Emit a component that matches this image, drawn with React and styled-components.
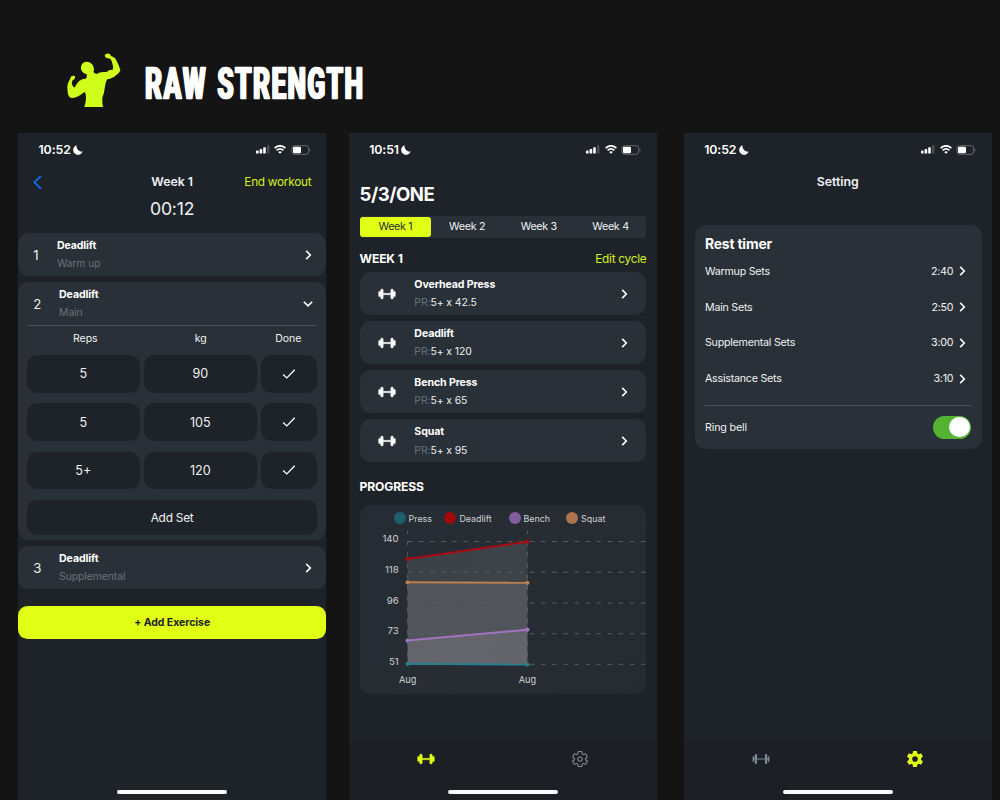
import React from "react";
import styled, { createGlobalStyle, css } from "styled-components";
import { IoBarbell, IoBarbellOutline, IoSettingsOutline, IoSettingsSharp } from "react-icons/io5";

const Global = createGlobalStyle`
  *, *::before, *::after { box-sizing: border-box; }
  body {
    margin: 0;
    background: #141414;
    color: #f0f1f2;
    font-family: Inter, "Liberation Sans", sans-serif;
  }
  h1, h2, h3, p { margin: 0; }
  svg { display: block; flex: none; }
`;

const Page = styled.div`
  width: 1000px;
  height: 800px;
  overflow: hidden;
  display: flex;
  flex-direction: column;
  background: #141414;
`;

const Brand = styled.header`
  height: 133px;
  padding: 45px 0 0 60px;
  display: flex;
  align-items: flex-start;
`;

const BrandName = styled.h1`
  margin: 9.4px 0 0 15px;
  font-family: "Roboto", "Liberation Sans", sans-serif;
  font-weight: 900;
  font-size: 45.2px;
  line-height: 60px;
  letter-spacing: 2.2px;
  word-spacing: 4px;
  font-kerning: none;
  white-space: nowrap;
  color: #fff;
  -webkit-text-stroke: 0.5px #fff;
  text-shadow: 1.3px 0 0 #fff, -1.3px 0 0 #fff;
  transform: scaleX(0.584);
  transform-origin: 0 50%;
`;

const Screens = styled.main`
  flex: 1;
  display: flex;
  gap: 23px;
  padding-left: 18.3px;
`;

const Screen = styled.section`
  width: 307.7px;
  height: 667px;
  flex: none;
  display: flex;
  flex-direction: column;
  background: #1e2329;
  & + & + & { margin-left: 4.3px; }
`;

const StatusRow = styled.div`
  height: 33px;
  flex: none;
  padding: 0 15.4px 0 20.2px;
  display: flex;
  align-items: center;
  justify-content: space-between;
`;

const Clock = styled.div`
  display: flex;
  align-items: center;
  gap: 2.2px;
  font-size: 12.3px;
  font-weight: 600;
  letter-spacing: -0.08px;
  color: #fff;
`;

const Signals = styled.div`
  display: flex;
  align-items: center;
  gap: 4.5px;
`;

const NavBar = styled.div`
  height: 32px;
  flex: none;
  padding: 0 14.7px;
  display: grid;
  grid-template-columns: 1fr auto 1fr;
  align-items: center;
`;

const NavTitle = styled.h2`
  grid-column: 2;
  font-size: 12.3px;
  line-height: 16px;
  font-weight: 600;
  margin-top: -1px;
`;

const TextAction = styled.button`
  border: 0;
  padding: 0;
  background: none;
  font: inherit;
  font-size: 11.8px;
  letter-spacing: -0.26px;
  line-height: 15px;
  color: #d5f01c;
  justify-self: end;
`;

const Timer = styled.div`
  height: 22px;
  margin-bottom: 13px;
  font-size: 17.6px;
  line-height: 22px;
  letter-spacing: -0.2px;
  text-align: center;
`;

const Stack = styled.div`
  display: flex;
  flex-direction: column;
  gap: 6px;
`;

const Card = styled.article`
  border-radius: 10.5px;
  background: #2a3037;
`;

const ExerciseHead = styled.div`
  height: 43.1px;
  display: grid;
  grid-template-columns: ${(p) => p.$cols};
  align-items: center;
`;

const Index = styled.span`
  font-size: 13.2px;
  padding-left: 15px;
`;

const Titles = styled.div`
  display: flex;
  flex-direction: column;
  gap: 3.4px;
  font-size: 10.4px;
  line-height: 15px;
  letter-spacing: -0.08px;
  white-space: nowrap;
`;

const Name = styled.h3`
  font-size: 10.6px;
  line-height: 15px;
  font-weight: 700;
  letter-spacing: -0.12px;
  color: #fff;
`;

const Muted = styled.span`
  color: #66747d;
`;

const SetPanel = styled.div`
  margin: 0 8.7px 0 8.5px;
  border-top: 1px solid #4b535a;
  padding-bottom: 5.5px;
`;

const setColumns = css`
  display: grid;
  grid-template-columns: 113px 113px 56px;
  column-gap: 4px;
`;

const SetLabels = styled.div`
  ${setColumns}
  height: 29px;
  padding-top: 5px;
  font-size: 10.5px;
  line-height: 15px;
  text-align: center;
  span:first-child { padding-left: 4px; }
  span:nth-child(2) { padding-left: 1px; }
  span:last-child { padding-right: 1px; }
`;

const SetRow = styled.div`
  ${setColumns}
  height: 37.6px;
  margin-bottom: 10.6px;
`;

const Cell = styled.div`
  display: flex;
  align-items: center;
  justify-content: center;
  border-radius: 10.5px;
  background: #1e2329;
  font-size: 12.6px;
`;

const AddSet = styled.button`
  display: block;
  width: 100%;
  height: 35px;
  border: 0;
  border-radius: 10px;
  background: #1e2329;
  color: #f0f1f2;
  font: inherit;
  font-size: 11.9px;
  letter-spacing: -0.25px;
`;

const AddExercise = styled.button`
  flex: none;
  height: 33.5px;
  margin-top: 16.5px;
  border: 0;
  border-radius: 9.5px;
  background: #e1ff14;
  color: #1e2329;
  font: inherit;
  font-size: 10.5px;
  font-weight: 700;
  letter-spacing: -0.05px;
`;

const HomeBar = styled.div`
  width: 110px;
  height: 4px;
  margin: auto auto 6px;
  border-radius: 2px;
  background: #fafafa;
`;

const Program = styled.div`
  display: flex;
  flex-direction: column;
  padding: 0 10.3px 0 10.6px;
`;

const ProgramTitle = styled.h2`
  padding: 16px 0 4px;
  font-size: 18.6px;
  line-height: 24px;
  font-weight: 700;
  letter-spacing: -0.5px;
  color: #fff;
`;

const Segments = styled.div`
  display: grid;
  grid-template-columns: repeat(4, 1fr);
  height: 22.5px;
  margin-top: 5.5px;
  padding: 1px 0;
  border-radius: 3px;
  background: #2a3037;
`;

const Segment = styled.button`
  border: 0;
  padding: 0 0 1px;
  border-radius: 3px;
  background: ${(p) => (p.$active ? "#e1ff14" : "transparent")};
  color: ${(p) => (p.$active ? "#2a3037" : "#f0f1f2")};
  font: inherit;
  font-size: 10.7px;
  letter-spacing: -0.28px;
`;

const SectionHead = styled.div`
  height: ${(p) => p.$height || 34}px;
  display: flex;
  align-items: center;
  justify-content: space-between;
  padding-top: ${(p) => p.$top || 8}px;
`;

const SectionTitle = styled.h2`
  font-size: 12.1px;
  line-height: 16px;
  font-weight: 700;
  letter-spacing: -0.15px;
  color: #fff;
`;

const ChartCard = styled(Card)`
  height: 188.5px;
  display: flex;
  flex-direction: column;
  background: linear-gradient(120deg, #252c33, #282d34 45%, #262b31);
`;

const Legend = styled.div`
  height: 26px;
  padding-left: 34px;
  display: grid;
  grid-template-columns: 50.8px 64.2px 57.5px auto;
`;

const LegendItem = styled.div`
  display: flex;
  align-items: center;
  gap: 3px;
  font-size: 8.9px;
  color: #d0d2d4;
  &::before {
    content: "";
    width: 12px;
    height: 12px;
    border-radius: 50%;
    background: ${(p) => p.$color};
  }
`;

const AxisText = styled.text`
  font-size: ${(p) => p.$size || 9.6}px;
  fill: #d0d2d4;
`;

const TabBar = styled.nav`
  height: 60px;
  flex: none;
  margin-top: auto;
  display: flex;
  flex-direction: column;
  background: #1c1f26;
`;

const Tabs = styled.div`
  height: 38px;
  display: grid;
  grid-template-columns: 1fr 1fr;
  place-items: center;
`;

const Tab = styled.div`
  display: flex;
  color: ${(p) => (p.$active ? "#e1ff14" : "#7c8a94")};
`;

const SolidBarbell = styled(IoBarbell)`
  stroke: currentColor;
  stroke-width: 9px;
`;

const SettingsCard = styled(Card)`
  margin: 27px 9.8px 0 11px;
  height: 224.4px;
  padding: 9px 10.6px 0 10px;
`;

const SettingsTitle = styled.h2`
  font-size: 13.9px;
  line-height: 20px;
  font-weight: 700;
  letter-spacing: -0.18px;
  color: #fff;
`;

const SettingRow = styled.div`
  height: 35.8px;
  display: flex;
  align-items: center;
  justify-content: space-between;
  font-size: 10.7px;
  letter-spacing: -0.24px;
  padding-right: 4.4px;
`;

const SettingList = styled.div`
  height: 152px;
  margin: -0.5px 0 8px;
  border-bottom: 1px solid #4b535a;
`;

const Value = styled.span`
  display: flex;
  align-items: center;
  gap: 3.6px;
`;

const BellRow = styled.div`
  height: 27px;
  display: flex;
  align-items: center;
  justify-content: space-between;
  font-size: 10.7px;
  letter-spacing: -0.15px;
`;

const Toggle = styled.span`
  display: flex;
  justify-content: flex-end;
  width: 38px;
  height: 23px;
  padding: 1.2px;
  border-radius: 12px;
  background: #55b334;
  &::after {
    content: "";
    width: 20.6px;
    height: 20.6px;
    border-radius: 50%;
    background: #fff;
  }
`;

const Flexing = () => (
  <svg width="70" height="70" viewBox="0 0 210 210" fill="#d0ff1c">
    <path d="M134 31Q138 24 147 26Q151 27 153 33L161 37Q167 40 171 50Q178 62 181 76Q180 81 173 87Q162 98 150 101L142 103Q137 109 135 124Q133 145 127 158Q126 174 129 186H73Q78 172 78 158L77 146L73 141Q66 147 55 154Q44 160 34 159Q26 157 24 148Q22 135 22 124Q23 115 27 108L30 102L34 94Q39 91 44 93Q47 97 44 101L37 107Q34 113 37 121Q40 127 43 128Q46 125 50 117Q56 107 67 103L77 101Q82 96 80 88Q67 85 63 73Q62 60 69 54Q79 47 91 53Q101 60 102 72Q102 78 100 81Q104 86 110 87Q118 81 130 81L140 81Q147 73 158 74Q162 68 158 60Q156 48 151 41L142 40L136 37Z" />
  </svg>
);

const Moon = () => (
  <svg width="10" height="10" viewBox="0 0 10 10" fill="#fff">
    <path d="M3.5.3A4.9 4.9 0 1 0 9.7 6.6 5.6 5.6 0 0 1 3.5.3Z" />
  </svg>
);

const StatusBar = ({ time }) => (
  <StatusRow>
    <Clock>{time}<Moon /></Clock>
    <Signals>
      <svg width="14" height="9" viewBox="0 0 14 9" fill="#fff">
        <rect x="0" y="5.6" width="2.6" height="2.9" rx=".6" />
        <rect x="3.6" y="4.1" width="2.6" height="4.4" rx=".6" />
        <rect x="7.2" y="2.3" width="2.6" height="6.2" rx=".6" />
        <rect x="11" y=".3" width="2.4" height="8.2" rx=".6" fill="#4c5055" />
      </svg>
      <svg width="12" height="9" viewBox="0 0 12 9" fill="none" stroke="#fff" strokeWidth="1.7">
        <path d="M.6 3.1Q6-1.5 11.4 3.1M2.6 5.3Q6 2.4 9.4 5.3" />
        <path d="M6 8.8 4.1 6.9Q6 5.4 7.9 6.9Z" fill="#fff" stroke="none" />
      </svg>
      <svg width="20" height="10" viewBox="0 0 20 10">
        <rect x=".9" y=".7" width="16.8" height="8.6" rx="2.5" fill="none" stroke="#6d7175" strokeWidth=".9" />
        <rect x="2" y="1.8" width="8" height="6.4" rx="1.3" fill="#fff" />
        <path d="M18.6 3.6Q19.6 4.2 19.6 5T18.6 6.4Z" fill="#6d7175" />
      </svg>
    </Signals>
  </StatusRow>
);

const Chevron = ({ down }) => (
  <svg width="10" height="10" viewBox="0 0 10 10" fill="none" stroke="#fff" strokeWidth="1.6">
    <path d={down ? "M.8 2.8 5 6.9 9.2 2.8" : "M3.2 .9 7.3 5 3.2 9.1"} />
  </svg>
);

const Check = () => (
  <svg width="14" height="12" viewBox="0 0 14 12" fill="none" stroke="#fff" strokeWidth="1.3">
    <path d="M1.2 6.5 4.8 9.9 12.8 1.8" />
  </svg>
);

const Exercise = ({ index, kind, open, shift }) => (
  <ExerciseHead $cols={shift ? "38.6px 1fr 23px" : "40.8px 1fr 23px"}>
    <Index>{index}</Index>
    <Titles>
      <Name>Deadlift</Name>
      <Muted>{kind}</Muted>
    </Titles>
    <Chevron down={open} />
  </ExerciseHead>
);

const sets = [["5", "90"], ["5", "105"], ["5+", "120"]];

const WorkoutScreen = () => (
  <Screen>
    <StatusBar time="10:52" />
    <NavBar>
      <svg width="9" height="15" viewBox="0 0 9 15" fill="none" stroke="#0a6cf5" strokeWidth="1.8">
        <path d="M8 .8 1.4 7.3 8 13.8" />
      </svg>
      <NavTitle>Week 1</NavTitle>
      <TextAction>End workout</TextAction>
    </NavBar>
    <Timer>00:12</Timer>
    <Stack>
      <Card><Exercise index="1" kind="Warm up" shift /></Card>
      <Card>
        <Exercise index="2" kind="Main" open />
        <SetPanel>
          <SetLabels><span>Reps</span><span>kg</span><span>Done</span></SetLabels>
          {sets.map(([reps, kg]) => (
            <SetRow key={kg}>
              <Cell>{reps}</Cell>
              <Cell>{kg}</Cell>
              <Cell><Check /></Cell>
            </SetRow>
          ))}
          <AddSet>Add Set</AddSet>
        </SetPanel>
      </Card>
      <Card><Exercise index="3" kind="Supplemental" /></Card>
    </Stack>
    <AddExercise>+ Add Exercise</AddExercise>
    <HomeBar />
  </Screen>
);

const lifts = [["Overhead Press", "42.5"], ["Deadlift", "120"], ["Bench Press", "65"], ["Squat", "95"]];
const axis = [[140, 36.5], [118, 67.3], [96, 98], [73, 128.7], [51, 159.3]];
const series = [
  { color: "#a80c10", from: 54, to: 36.8 },
  { color: "#bd8150", from: 77.3, to: 77.8 },
  { color: "#a274c0", from: 135.5, to: 124.7 },
  { color: "#2b7f8c", from: 158.8, to: 159.6 },
];

const Chart = () => (
  <svg width="286.7" height="162" viewBox="0 26 286.7 162">
    {series.map((s) => (
      <path key={s.color} d={`M47.6 ${s.from}L167.4 ${s.to}V159.6H47.6Z`} fill="#f4ecf8" fillOpacity=".11" />
    ))}
    <g stroke="#5d6369" strokeWidth=".9" strokeDasharray="4.3 6.8">
      {axis.map(([v, y]) => <path key={v} d={`M48 ${y}H286`} />)}
      <path d="M47.6 25V159M167.4 25V159" />
    </g>
    {series.map((s) => (
      <g key={s.color} fill={s.color}>
        <path d={`M47.6 ${s.from}L167.4 ${s.to}`} stroke={s.color} strokeWidth="2" />
        <circle cx="47.6" cy={s.from} r="2.1" />
        <circle cx="167.4" cy={s.to} r="2.1" />
      </g>
    ))}
    {axis.map(([v, y]) => <AxisText key={v} x="38.6" y={y + 0.6} textAnchor="end">{v}</AxisText>)}
    <AxisText $size={9.2} x="47.6" y="177.8" textAnchor="middle">Aug</AxisText>
    <AxisText $size={9.2} x="167.4" y="177.8" textAnchor="middle">Aug</AxisText>
  </svg>
);

const BottomTabs = ({ active }) => (
  <TabBar>
    <Tabs>
      <Tab $active={active === "lifts"}>
        {active === "lifts" ? <SolidBarbell size={18} /> : <IoBarbellOutline size={18} />}
      </Tab>
      <Tab $active={active === "settings"}>
        {active === "settings" ? <IoSettingsSharp size={18} /> : <IoSettingsOutline size={18} />}
      </Tab>
    </Tabs>
    <HomeBar />
  </TabBar>
);

const ProgramScreen = () => (
  <Screen>
    <StatusBar time="10:51" />
    <Program>
      <ProgramTitle>5/3/ONE</ProgramTitle>
      <Segments>
        {[1, 2, 3, 4].map((n) => <Segment key={n} $active={n === 1}>Week {n}</Segment>)}
      </Segments>
      <SectionHead>
        <SectionTitle>WEEK 1</SectionTitle>
        <TextAction>Edit cycle</TextAction>
      </SectionHead>
      <Stack>
        {lifts.map(([name, kg]) => (
          <Card key={name}>
            <ExerciseHead $cols="18.6px 36.2px 1fr 27px">
              <span />
              <SolidBarbell size={18} color="#fff" />
              <Titles>
                <Name>{name}</Name>
                <span><Muted>PR:</Muted>5+ x {kg}</span>
              </Titles>
              <Chevron />
            </ExerciseHead>
          </Card>
        ))}
      </Stack>
      <SectionHead $height={42.8} $top={6}>
        <SectionTitle>PROGRESS</SectionTitle>
      </SectionHead>
      <ChartCard>
        <Legend>
          <LegendItem $color="#1f5f6e">Press</LegendItem>
          <LegendItem $color="#a20a0e">Deadlift</LegendItem>
          <LegendItem $color="#835c9c">Bench</LegendItem>
          <LegendItem $color="#ab744a">Squat</LegendItem>
        </Legend>
        <Chart />
      </ChartCard>
    </Program>
    <BottomTabs active="lifts" />
  </Screen>
);

const rests = [["Warmup Sets", "2:40"], ["Main Sets", "2:50"], ["Supplemental Sets", "3:00"], ["Assistance Sets", "3:10"]];

const SettingScreen = () => (
  <Screen>
    <StatusBar time="10:52" />
    <NavBar><NavTitle>Setting</NavTitle></NavBar>
    <SettingsCard>
      <SettingsTitle>Rest timer</SettingsTitle>
      <SettingList>
        {rests.map(([label, time]) => (
          <SettingRow key={label}>
            <span>{label}</span>
            <Value>{time}<Chevron /></Value>
          </SettingRow>
        ))}
      </SettingList>
      <BellRow><span>Ring bell</span><Toggle /></BellRow>
    </SettingsCard>
    <BottomTabs active="settings" />
  </Screen>
);

export default function App() {
  return (
    <Page>
      <Global />
      <Brand>
        <Flexing />
        <BrandName>RAW STRENGTH</BrandName>
      </Brand>
      <Screens>
        <WorkoutScreen />
        <ProgramScreen />
        <SettingScreen />
      </Screens>
    </Page>
  );
}
